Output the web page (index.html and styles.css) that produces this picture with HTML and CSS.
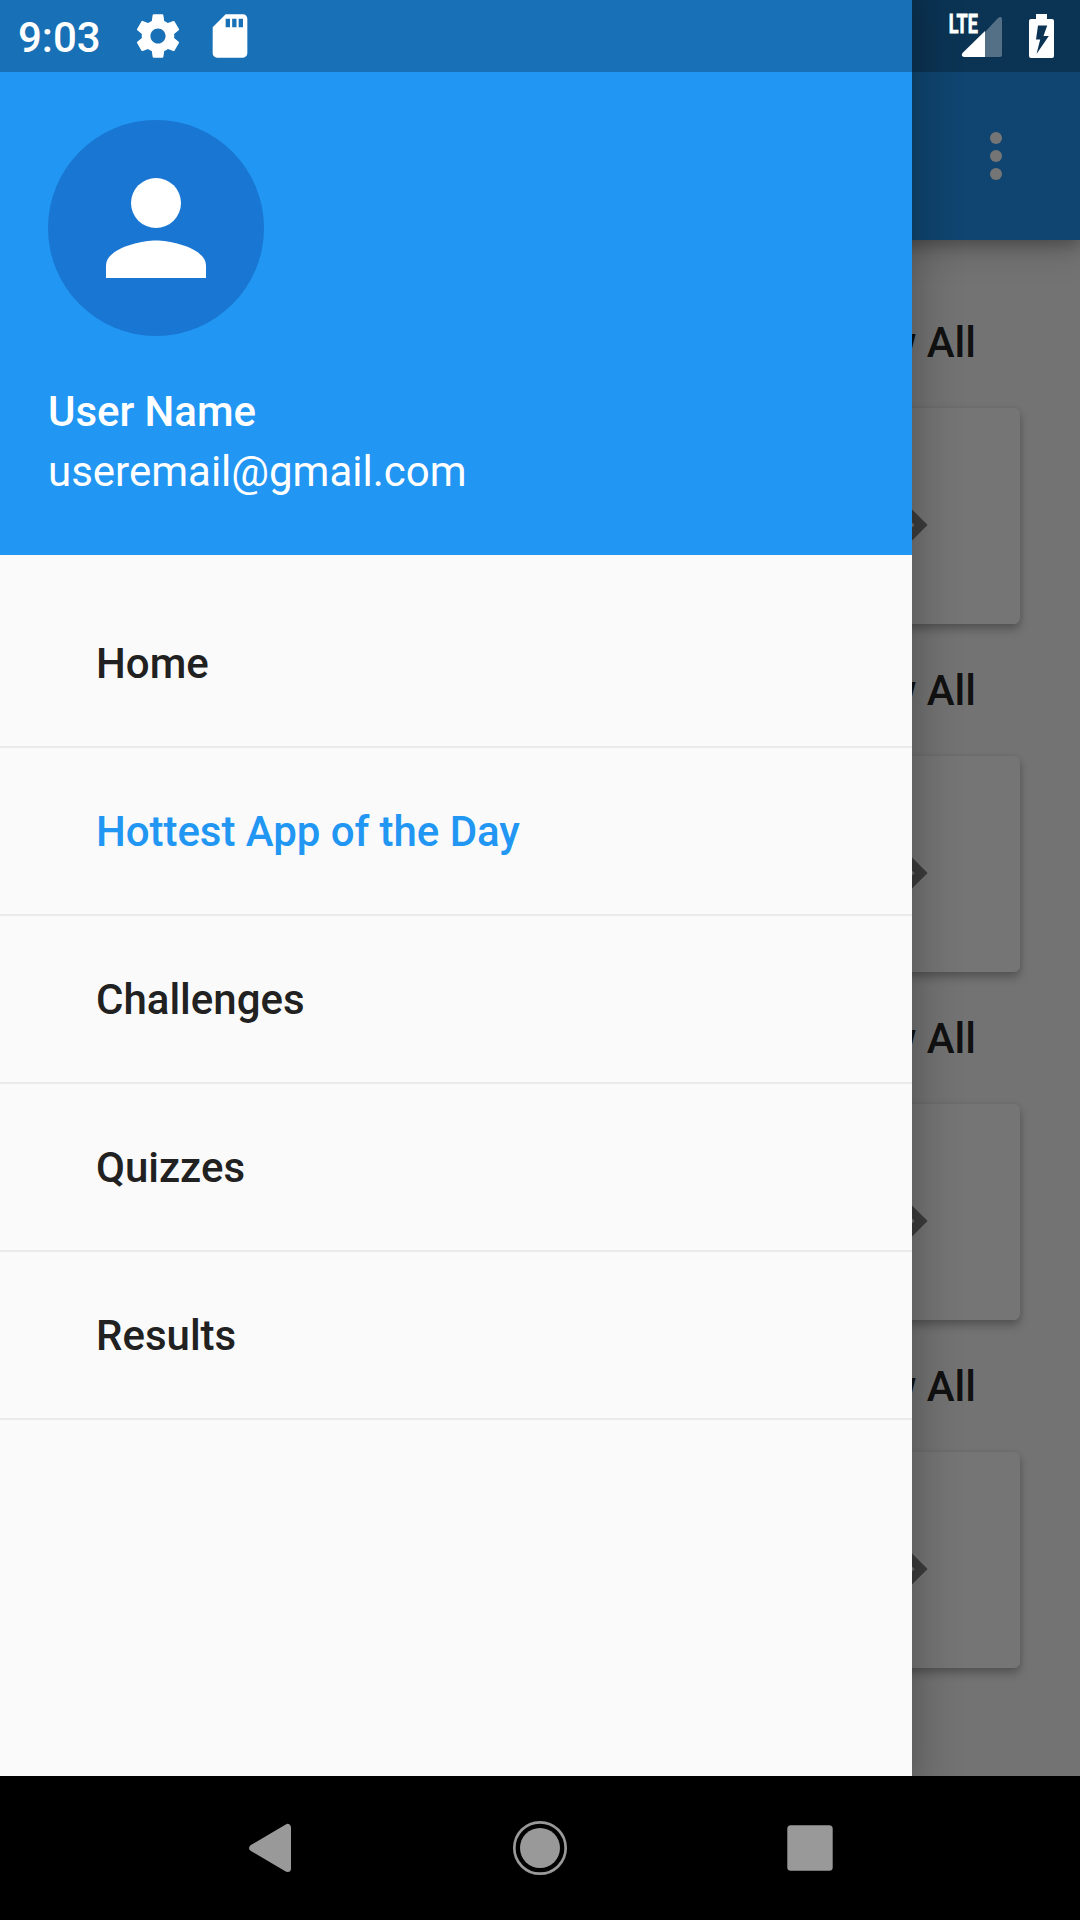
FILE: index.html
```html
<!DOCTYPE html>
<html lang="en">
<head>
<meta charset="utf-8">
<title>Navigation drawer</title>
<link rel="stylesheet" href="styles.css">
</head>
<body>
<div class="device">
  <div class="screen">
    <header class="app-bar">
      <svg class="more" viewBox="0 0 24 24"><circle cx="12" cy="6" r="2"/><circle cx="12" cy="12" r="2"/><circle cx="12" cy="18" r="2"/></svg>
    </header>
    <main class="feed">
      <section class="group"><h2>View All</h2><div class="card"><svg class="chevron" viewBox="0 0 40 64"><path d="M4 9 27 32 4 55"/></svg></div></section>
      <section class="group"><h2>View All</h2><div class="card"><svg class="chevron" viewBox="0 0 40 64"><path d="M4 9 27 32 4 55"/></svg></div></section>
      <section class="group"><h2>View All</h2><div class="card"><svg class="chevron" viewBox="0 0 40 64"><path d="M4 9 27 32 4 55"/></svg></div></section>
      <section class="group"><h2>View All</h2><div class="card"><svg class="chevron" viewBox="0 0 40 64"><path d="M4 9 27 32 4 55"/></svg></div></section>
    </main>
    <div class="scrim"></div>
    <aside class="drawer">
      <div class="account">
        <div class="avatar"><svg viewBox="0 0 24 24"><circle cx="12" cy="8" r="4"/><path d="M12 14c-2.67 0-8 1.34-8 4v2h16v-2c0-2.66-5.33-4-8-4z"/></svg></div>
        <div class="name">User Name</div>
        <div class="email">useremail@gmail.com</div>
      </div>
      <nav class="menu">
        <a class="item">Home</a>
        <a class="item active">Hottest App of the Day</a>
        <a class="item">Challenges</a>
        <a class="item">Quizzes</a>
        <a class="item">Results</a>
      </nav>
    </aside>
    <div class="status">
      <span class="time">9:03</span>
      <svg class="gear" viewBox="0 0 24 24"><path d="M19.43 12.98c.04-.32.07-.64.07-.98s-.03-.66-.07-.98l2.11-1.65c.19-.15.24-.42.12-.64l-2-3.46c-.12-.22-.39-.3-.61-.22l-2.49 1c-.52-.4-1.08-.73-1.69-.98l-.38-2.65C14.46 2.18 14.25 2 14 2h-4c-.25 0-.46.18-.49.42l-.38 2.65c-.61.25-1.17.59-1.69.98l-2.49-1c-.23-.09-.49 0-.61.22l-2 3.46c-.13.22-.07.49.12.64l2.11 1.65c-.04.32-.07.65-.07.98s.03.66.07.98l-2.11 1.65c-.19.15-.24.42-.12.64l2 3.46c.12.22.39.3.61.22l2.49-1c.52.4 1.08.73 1.69.98l.38 2.65c.03.24.24.42.49.42h4c.25 0 .46-.18.49-.42l.38-2.65c.61-.25 1.17-.59 1.69-.98l2.49 1c.23.09.49 0 .61-.22l2-3.46c.12-.22.07-.49-.12-.64l-2.11-1.65zM12 15.5c-1.93 0-3.5-1.57-3.5-3.5s1.57-3.5 3.5-3.5 3.5 1.57 3.5 3.5-1.57 3.5-3.5 3.5z"/></svg>
      <svg class="sd" viewBox="0 0 24 24"><path d="M18 2h-8L4.02 8 4 20c0 1.1.9 2 2 2h12c1.1 0 2-.9 2-2V4c0-1.1-.9-2-2-2zm-6 6h-2V4h2v4zm3 0h-2V4h2v4zm3 0h-2V4h2v4z"/></svg>
      <svg class="radio" viewBox="0 0 120 72">
        <path class="weak" d="M45 32 57.8 18.2Q62 15 62 20V55Q62 57 60 57H45z"/>
        <path d="M45 31V57H24Q20.500 56 22.500 53z"/>
        <text x="8.800" y="33.300" textLength="29" lengthAdjust="spacingAndGlyphs">LTE</text>
        <path fill-rule="evenodd" d="M96 14h11v5h5q2 0 2 2v35q0 2-2 2H91q-2 0-2-2V21q0-2 2-2h5zM98 25.500 96 39.500h4.200L96.500 54 108.800 36h-5.300L107.200 25.500z"/>
      </svg>
    </div>
  </div>
  <div class="nav">
    <svg viewBox="0 0 72 72"><path class="round" d="M53.500 15.500V56.500L18.700 36z"/></svg>
    <svg viewBox="0 0 72 72"><circle class="ring" cx="36" cy="36" r="25.700"/><circle cx="36" cy="36" r="20"/></svg>
    <svg viewBox="0 0 72 72"><rect x="13.300" y="13.300" width="45.400" height="45.400" rx="3.500"/></svg>
  </div>
</div>
</body>
</html>
```
FILE: styles.css
```css
* { box-sizing: border-box; }
body { margin: 0; font-family: Roboto, "Liberation Sans", sans-serif; font-size: 42px; }
svg { display: block; flex: none; }
.device { display: flex; flex-direction: column; width: 1080px; height: 1920px; overflow: hidden; }
.screen { position: relative; flex: 1; overflow: hidden; background: #fafafa; }

.app-bar { position: relative; display: flex; align-items: center; justify-content: flex-end; height: 240px; padding: 72px 48px 0 0; background: #2196f3; box-shadow: 0 6px 12px rgba(0,0,0,.2), 0 12px 30px rgba(0,0,0,.18); }
.more { width: 72px; height: 72px; fill: #fff; }
.feed { display: flex; flex-direction: column; padding: 36px 60px; }
.group { height: 348px; }
.group h2 { display: flex; align-items: center; justify-content: flex-end; height: 132px; margin: 0; padding: 0 44px 0 0; font-size: 42px; font-weight: 500; color: rgba(0,0,0,.87); }
.card { display: flex; align-items: center; justify-content: flex-end; height: 216px; padding: 18px 86px 0 0; border-radius: 6px; background: #fff; box-shadow: 0 6px 10px rgba(0,0,0,.22), 0 1px 6px rgba(0,0,0,.12); }
.chevron { width: 40px; height: 64px; fill: none; stroke: #858585; stroke-width: 9.3; }

.scrim { position: absolute; inset: 0; background: rgba(0,0,0,.54); }
.drawer { position: absolute; top: 0; bottom: 0; left: 0; width: 912px; background: #fafafa; box-shadow: -18px 0 44px 20px rgba(0,0,0,.3); }
.account { height: 555px; padding: 120px 48px 0; color: #fff; background: #2196f3; }
.avatar { display: flex; align-items: center; justify-content: center; width: 216px; height: 216px; border-radius: 50%; background: #1976d2; }
.avatar svg { width: 150px; height: 150px; fill: #fff; }
.name { margin-top: 51px; font-weight: 500; line-height: 49px; letter-spacing: -.06px; }
.email { margin-top: 11px; line-height: 49px; }
.menu { display: flex; flex-direction: column; padding-top: 25px; }
.item { display: flex; align-items: center; height: 168px; padding-left: 96px; border-bottom: 2px solid #ebebeb; font-weight: 500; color: #212121; }
.active { color: #2196f3; letter-spacing: -.05px; }

.status { position: absolute; top: 0; left: 0; right: 0; display: flex; align-items: center; height: 72px; padding-left: 18px; color: #fff; background: rgba(0,0,0,.25); }
.status svg { fill: #fff; }
.time { width: 114px; padding-top: 3px; font-weight: 500; }
.gear, .sd { width: 52px; height: 52px; }
.sd { margin-left: 20px; }
.radio { width: 120px; height: 72px; margin-left: auto; margin-right: 20px; font-size: 26px; font-weight: 700; }
.radio text { stroke: #fff; stroke-width: .8; }
.radio .weak { fill: rgba(255,255,255,.3); }

.nav { display: flex; align-items: center; justify-content: center; gap: 198px; height: 144px; background: #000; }
.nav svg { width: 72px; height: 72px; fill: #999; }
.nav .round { stroke: #999; stroke-width: 7; stroke-linejoin: round; }
.nav .ring { fill: none; stroke: #999; stroke-width: 2.7; }
```
